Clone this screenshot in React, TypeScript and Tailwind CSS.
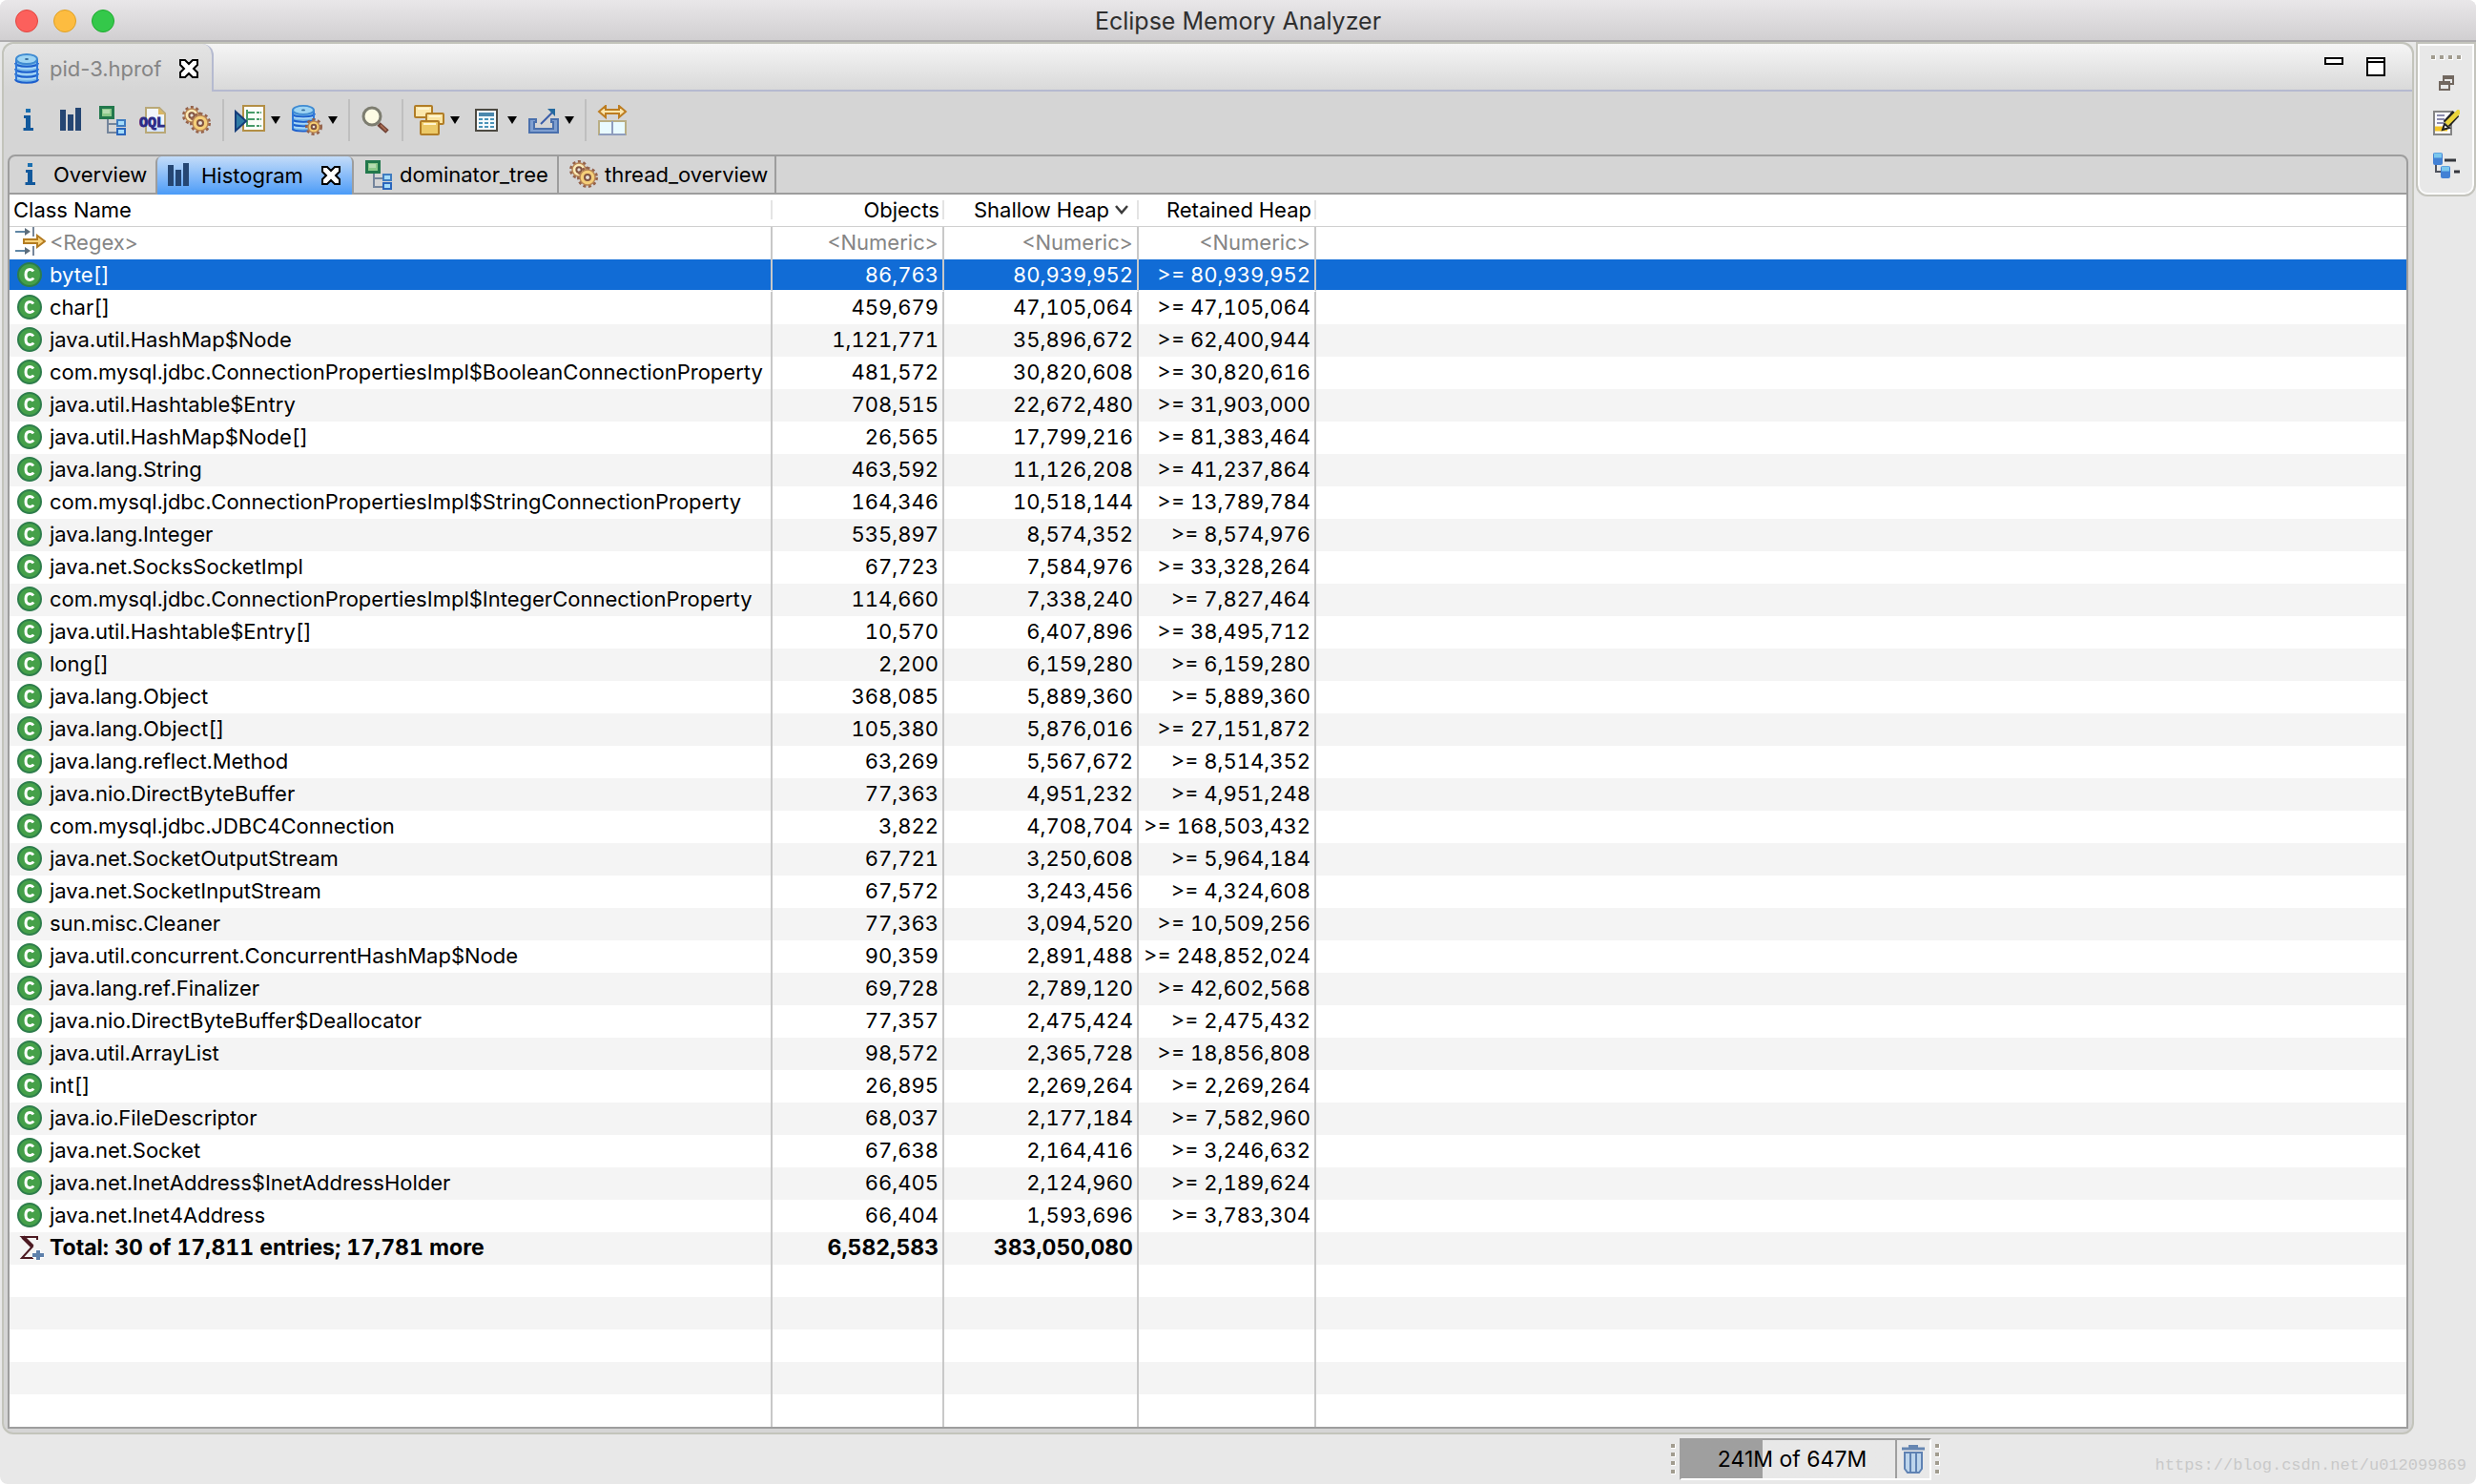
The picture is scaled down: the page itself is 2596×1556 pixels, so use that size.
import { clsx } from "clsx";
import { useState, type ReactNode } from "react";

type Row = [name: string, objects: string, shallow: string, retained: string];

const ROWS: Row[] = [
  ["byte[]", "86,763", "80,939,952", ">= 80,939,952"],
  ["char[]", "459,679", "47,105,064", ">= 47,105,064"],
  ["java.util.HashMap$Node", "1,121,771", "35,896,672", ">= 62,400,944"],
  ["com.mysql.jdbc.ConnectionPropertiesImpl$BooleanConnectionProperty", "481,572", "30,820,608", ">= 30,820,616"],
  ["java.util.Hashtable$Entry", "708,515", "22,672,480", ">= 31,903,000"],
  ["java.util.HashMap$Node[]", "26,565", "17,799,216", ">= 81,383,464"],
  ["java.lang.String", "463,592", "11,126,208", ">= 41,237,864"],
  ["com.mysql.jdbc.ConnectionPropertiesImpl$StringConnectionProperty", "164,346", "10,518,144", ">= 13,789,784"],
  ["java.lang.Integer", "535,897", "8,574,352", ">= 8,574,976"],
  ["java.net.SocksSocketImpl", "67,723", "7,584,976", ">= 33,328,264"],
  ["com.mysql.jdbc.ConnectionPropertiesImpl$IntegerConnectionProperty", "114,660", "7,338,240", ">= 7,827,464"],
  ["java.util.Hashtable$Entry[]", "10,570", "6,407,896", ">= 38,495,712"],
  ["long[]", "2,200", "6,159,280", ">= 6,159,280"],
  ["java.lang.Object", "368,085", "5,889,360", ">= 5,889,360"],
  ["java.lang.Object[]", "105,380", "5,876,016", ">= 27,151,872"],
  ["java.lang.reflect.Method", "63,269", "5,567,672", ">= 8,514,352"],
  ["java.nio.DirectByteBuffer", "77,363", "4,951,232", ">= 4,951,248"],
  ["com.mysql.jdbc.JDBC4Connection", "3,822", "4,708,704", ">= 168,503,432"],
  ["java.net.SocketOutputStream", "67,721", "3,250,608", ">= 5,964,184"],
  ["java.net.SocketInputStream", "67,572", "3,243,456", ">= 4,324,608"],
  ["sun.misc.Cleaner", "77,363", "3,094,520", ">= 10,509,256"],
  ["java.util.concurrent.ConcurrentHashMap$Node", "90,359", "2,891,488", ">= 248,852,024"],
  ["java.lang.ref.Finalizer", "69,728", "2,789,120", ">= 42,602,568"],
  ["java.nio.DirectByteBuffer$Deallocator", "77,357", "2,475,424", ">= 2,475,432"],
  ["java.util.ArrayList", "98,572", "2,365,728", ">= 18,856,808"],
  ["int[]", "26,895", "2,269,264", ">= 2,269,264"],
  ["java.io.FileDescriptor", "68,037", "2,177,184", ">= 7,582,960"],
  ["java.net.Socket", "67,638", "2,164,416", ">= 3,246,632"],
  ["java.net.InetAddress$InetAddressHolder", "66,405", "2,124,960", ">= 2,189,624"],
  ["java.net.Inet4Address", "66,404", "1,593,696", ">= 3,783,304"]
];

const BLANK_ROWS = [0, 1, 2, 3, 4];

function Icon({ children }: { children: ReactNode }) {
  return (
    <svg aria-hidden="true" className="size-8 shrink-0" viewBox="0 0 32 32">
      {children}
    </svg>
  );
}

function InfoIcon() {
  return (
    <Icon>
      <rect fill="#1a6fb0" height="4" width="5" x="13" y="4" />
      <path d="M11 11h7v13h3v3H10.500v-3H13V14h-2z" fill="#12599c" />
    </Icon>
  );
}

function BarsIcon() {
  return (
    <Icon>
      <path d="M5 5h6v22H5zM13 10h6v17h-6zM21 3h6v24h-6z" fill="#254673" />
    </Icon>
  );
}

function TreeIcon() {
  return (
    <Icon>
      <path d="M11 15v14h9M11 20h9" fill="none" stroke="#74859c" strokeWidth="2" />
      <rect fill="#8cc98a" height="11" stroke="#22784c" strokeWidth="3" width="13" x="3.500" y="2.500" />
      <rect fill="#b5dcb0" height="4" width="7" x="6" y="5" />
      <rect fill="#a5dcfa" height="6" stroke="#3f7cc0" strokeWidth="2" width="8" x="21" y="16" />
      <rect fill="#a5dcfa" height="6" stroke="#2a66bd" strokeWidth="2" width="8" x="21" y="25" />
    </Icon>
  );
}

function OqlIcon() {
  return (
    <Icon>
      <path d="M7 3h14l6 6v20H7z" fill="#f2f5fb" stroke="#b9a877" strokeWidth="2" />
      <path d="M20 3v7h7z" fill="#d9b765" />
      <path d="M8 21h18v7H8z" fill="#d7e6f8" />
      <text className="font-['Liberation_Mono',monospace] font-bold" fill="#2c2a86" fontSize="15" stroke="#2c2a86" strokeWidth="1" x="0" y="23">
        OQL
      </text>
    </Icon>
  );
}

function Gear({ cx, cy, r, fill }: { cx: number; cy: number; r: number; fill: string }) {
  return (
    <g>
      <circle cx={cx} cy={cy} fill="none" r={r} stroke="#94614a" strokeDasharray="2.800 2.400" strokeWidth="4" />
      <circle cx={cx} cy={cy} fill={fill} r={r - 1} stroke="#b98655" strokeWidth="1.500" />
      <circle cx={cx} cy={cy} fill="#e8e2da" r={r / 3} stroke="#80523f" strokeWidth="2" />
    </g>
  );
}

function GearsIcon() {
  return (
    <Icon>
      <Gear cx={11} cy={11} fill="#fbeab6" r={8} />
      <Gear cx={20} cy={19} fill="#f5cf79" r={9} />
    </Icon>
  );
}

function Cylinder() {
  return (
    <>
      <path d="M4 6v21c0 5 24 5 24 0V6z" fill="#76b6e8" />
      <path d="M4 12c0 5 24 5 24 0M4 18c0 5 24 5 24 0M4 23c0 5 24 5 24 0" fill="none" stroke="#a9d8f7" strokeWidth="2" />
      <path d="M4 10c0 5 24 5 24 0M4 16c0 5 24 5 24 0M4 21c0 5 24 5 24 0M4 27c0 5 24 5 24 0" fill="none" stroke="#1d5fcd" strokeWidth="2" />
      <path d="M5 6v22M27 6v22" stroke="#2f78d8" strokeWidth="2" />
      <ellipse cx="16" cy="6" fill="#9ed4f3" rx="11" ry="5" stroke="#3f8bd2" strokeWidth="2" />
      <ellipse cx="16" cy="6" fill="#35699a" rx="2" ry="1" />
    </>
  );
}

function DatabaseIcon() {
  return (
    <Icon>
      <Cylinder />
    </Icon>
  );
}

function DatabaseGearIcon() {
  return (
    <Icon>
      <g transform="translate(-4 0) scale(1 .9)">
        <Cylinder />
      </g>
      <Gear cx={23} cy={23} fill="#f6cf72" r={7} />
    </Icon>
  );
}

function ReportIcon() {
  return (
    <Icon>
      <rect fill="#fbfdf8" height="26" stroke="#b38f45" strokeWidth="2" width="22" x="9" y="1" />
      <path d="M13 5v18M13 8h8M13 15h8M13 22h8" fill="none" stroke="#479a69" strokeWidth="2" />
      <path d="M23 8h5M23 15h5M23 22h5" stroke="#479a69" strokeDasharray="3 1" strokeWidth="2" />
      <path d="M1 7l11 10L1 27z" fill="#2f7ba5" stroke="#153d7a" strokeWidth="2" />
    </Icon>
  );
}

function SearchIcon() {
  return (
    <Icon>
      <path d="M19 20l9 8" stroke="#6f4034" strokeWidth="5" />
      <path d="M21 21l6 6" stroke="#a86c52" strokeWidth="2" />
      <circle cx="12" cy="12" fill="#fdfbe4" r="9" stroke="#7d7d70" strokeWidth="3" />
    </Icon>
  );
}

function GroupIcon() {
  return (
    <Icon>
      <g stroke="#b17d26" strokeWidth="2">
        <rect fill="#fbe7ac" height="12" rx="1" width="18" x="1" y="1" />
        <rect fill="#fae3a0" height="11" rx="1" width="18" x="13" y="9" />
        <rect fill="#ecc967" height="14" rx="1" width="19" x="7" y="17" />
      </g>
      <path d="M4 4h12M16 12h12M10 20h13" stroke="#fff5d0" strokeWidth="2" />
    </Icon>
  );
}

function CalculatorIcon() {
  return (
    <Icon>
      <rect fill="#f4fafd" height="22" stroke="#4c4941" strokeWidth="2" width="22" x="5" y="5" />
      <path d="M8 10h16" stroke="#4a87ad" strokeWidth="4" />
      <path d="M8 15h16M8 19h16M8 23h16" stroke="#4a93b8" strokeDasharray="4 2" strokeWidth="2" />
    </Icon>
  );
}

function ExportIcon() {
  return (
    <Icon>
      <path d="M1 15h7v3H6v7h20v-7h-2v-3h7v14H1z" fill="#7f9fd0" stroke="#4a70ad" strokeWidth="2" />
      <path d="M13 20L25 8" fill="none" stroke="#3a5da8" strokeWidth="2" />
      <path d="M20 4h8v8z" fill="#24699f" />
    </Icon>
  );
}

function CompareIcon() {
  return (
    <Icon>
      <path d="M2 7l7-6v4h14V1l7 6-7 6V9H9v4z" fill="#fbe6ad" stroke="#bd7d21" strokeWidth="2" />
      <rect fill="#e9fbff" height="14" stroke="#b9ae84" strokeWidth="2" width="28" x="2" y="17" />
      <path d="M16 17v14M2 31h28" stroke="#8f9dbd" strokeWidth="2" />
    </Icon>
  );
}

function FilterIcon() {
  return (
    <Icon>
      <path d="M0 5h12M0 25h12" stroke="#5f86a5" strokeWidth="2" />
      <path d="M10 1l6 4-6 4zM10 21l6 4-6 4z" fill="#5c6d7c" />
      <path d="M19 0v10M19 20v10" stroke="#76869a" strokeWidth="2" />
      <path d="M9 13h14V9l8 6-8 6v-4H9z" fill="#f9d37d" stroke="#b47c22" strokeWidth="2" />
    </Icon>
  );
}

function ClassIcon() {
  return (
    <svg aria-hidden="true" className="size-[26px] shrink-0" viewBox="0 0 26 26">
      <circle cx="13" cy="13" fill="#45a049" r="12" stroke="#2d7d4b" strokeWidth="2" />
      <path d="M17 9.500c-1-1.500-2-2-3.500-2-3 0-4.500 2-4.500 5.500s1.500 5.500 4.500 5.500c1.500 0 2.700-.5 3.700-2" fill="none" stroke="#fff" strokeWidth="3" />
    </svg>
  );
}

function TotalIcon() {
  return (
    <svg aria-hidden="true" className="size-[26px] shrink-0" viewBox="0 0 26 26">
      <path d="M19 5V2H3l11 10L3 24h12" fill="none" stroke="#4c1a22" strokeWidth="2" />
      <path d="M4 2l10 10" stroke="#4c1a22" strokeWidth="4" />
      <path d="M20 15v11M14 21h12" stroke="#fff" strokeWidth="6" />
      <path d="M20 16v10M14 21h12" stroke="#5d80ab" strokeWidth="4" />
    </svg>
  );
}

function CloseIcon() {
  return (
    <svg aria-hidden="true" className="size-5" viewBox="0 0 20 20">
      <path
        d="M1 1h5l4 4 4-4h5v5l-4 4 4 4v5h-5l-4-4-4 4H1v-5l4-4-4-4z"
        fill="#fff"
        stroke="#000"
        strokeWidth="2"
      />
    </svg>
  );
}

function Grip({ vertical = false }: { vertical?: boolean }) {
  return (
    <div className={clsx("flex gap-1", vertical && "flex-col")}>
      {[0, 1, 2, 3].map((dot) => (
        <span className="size-[5px] border-r border-b border-white bg-[#a19c8f]" key={dot} />
      ))}
    </div>
  );
}

function ToolButton({ label, menu = false, children }: { label: string; menu?: boolean; children: ReactNode }) {
  return (
    <button aria-label={label} className="flex items-center gap-1.5" type="button">
      {children}
      {menu ? (
        <svg aria-hidden="true" className="h-2 w-2.5" viewBox="0 0 10 8">
          <path d="M0 0h10L5 8z" />
        </svg>
      ) : null}
    </button>
  );
}

function Separator() {
  return <span className="-mx-px h-11 w-0.5 bg-[#bfbfbf]" />;
}

function Toolbar() {
  return (
    <div className="flex h-[66px] shrink-0 items-center gap-3 pb-4 pl-2.5 pt-2.5">
      <ToolButton label="Overview"><InfoIcon /></ToolButton>
      <ToolButton label="Histogram"><BarsIcon /></ToolButton>
      <ToolButton label="Dominator tree"><TreeIcon /></ToolButton>
      <ToolButton label="Object query"><OqlIcon /></ToolButton>
      <ToolButton label="Thread overview"><GearsIcon /></ToolButton>
      <Separator />
      <ToolButton label="Run report" menu><ReportIcon /></ToolButton>
      <ToolButton label="Query browser" menu><DatabaseGearIcon /></ToolButton>
      <Separator />
      <ToolButton label="Find object"><SearchIcon /></ToolButton>
      <Separator />
      <ToolButton label="Group result" menu><GroupIcon /></ToolButton>
      <ToolButton label="Calculate retained size" menu><CalculatorIcon /></ToolButton>
      <ToolButton label="Export" menu><ExportIcon /></ToolButton>
      <Separator />
      <ToolButton label="Compare"><CompareIcon /></ToolButton>
    </div>
  );
}

function ViewTabs() {
  return (
    <div className="flex h-10 shrink-0 border-b-2 border-[#9d9d9d]" role="tablist">
      <button className="flex w-[153px] items-center gap-2 pl-1.5" role="tab" type="button">
        <InfoIcon />
        Overview
      </button>
      <div className="-mb-0.5 flex w-[208px] items-center justify-between rounded-t-md border-x-2 border-[#9d9d9d] bg-linear-to-b from-[#c3dcf8] to-[#4a9bf7] pl-1.5 pr-3">
        <button aria-selected="true" className="flex items-center gap-2" role="tab" type="button">
          <BarsIcon />
          Histogram
        </button>
        <button aria-label="Close Histogram" type="button"><CloseIcon /></button>
      </div>
      <button className="flex w-[215px] items-center gap-1.5 border-r-2 border-[#9d9d9d] pl-2.5" role="tab" type="button">
        <TreeIcon />
        dominator_tree
      </button>
      <button className="flex w-[228px] items-center gap-1.5 border-r-2 border-[#9d9d9d] pl-2.5" role="tab" type="button">
        <GearsIcon />
        thread_overview
      </button>
    </div>
  );
}

const CELL = "border-r-2 border-[#c8c8c8] pr-1 text-right";
const HEAD = "pb-[7px] pt-1.5 font-normal";
const HEAD_LABEL = "flex h-5 items-center justify-end border-r-2 border-[#e4e4e4] pr-[3px]";

function HistogramTable() {
  const [selected, setSelected] = useState(0);

  return (
    <table className="w-full table-fixed border-separate border-spacing-0 whitespace-nowrap tabular-nums">
      <colgroup>
        <col className="w-[800px]" />
        <col className="w-[180px]" />
        <col className="w-[204px]" />
        <col className="w-[186px]" />
        <col />
      </colgroup>
      <thead>
        <tr className="h-[34px] [&>th]:border-b [&>th]:border-[#d0d0d0]">
          <th className={HEAD} scope="col">
            <span className="flex h-5 items-center border-r-2 border-[#e4e4e4] pl-1">Class Name</span>
          </th>
          <th className={HEAD} scope="col"><span className={HEAD_LABEL}>Objects</span></th>
          <th aria-sort="descending" className={HEAD} scope="col">
            <span className={clsx(HEAD_LABEL, "gap-1.5")}>
              Shallow Heap
              <svg aria-hidden="true" className="mr-1.5 h-2.5 w-3.5" viewBox="0 0 14 10">
                <path d="M1 1l6 7 6-7" fill="none" stroke="#3c3c3c" strokeWidth="2.500" />
              </svg>
            </span>
          </th>
          <th className={HEAD} scope="col"><span className={HEAD_LABEL}>Retained Heap</span></th>
          <th className={HEAD} />
        </tr>
      </thead>
      <tbody>
        <tr className="h-[34px] [&>td]:pb-0.5">
          <td className="border-r-2 border-[#c8c8c8] pl-1.5">
            <span className="flex items-center gap-1">
              <FilterIcon />
              <input aria-label="Class name filter" className="h-7 w-full placeholder:text-[#858585] placeholder:opacity-100" placeholder="<Regex>" />
            </span>
          </td>
          {["Objects", "Shallow heap", "Retained heap"].map((name) => (
            <td className={CELL} key={name}>
              <input
                aria-label={`${name} filter`}
                className="block h-7 w-full text-right placeholder:text-[#858585] placeholder:opacity-100"
                placeholder="<Numeric>"
              />
            </td>
          ))}
          <td />
        </tr>
        {ROWS.map(([name, objects, shallow, retained], index) => (
          <tr
            aria-selected={index === selected}
            className={clsx(
              "h-[34px]",
              index === selected
                ? "bg-[#116cd6] text-white [&>td]:border-b-2 [&>td]:border-b-white"
                : "bg-white even:bg-[#f4f4f4] [&>td]:pb-0.5"
            )}
            key={name}
            onClick={() => setSelected(index)}
          >
            <td className="border-r-2 border-[#c8c8c8] pl-2">
              <span className="flex items-center gap-2">
                <ClassIcon />
                {name}
              </span>
            </td>
            <td className={CELL}>{objects}</td>
            <td className={CELL}>{shallow}</td>
            <td className={CELL}>{retained}</td>
            <td />
          </tr>
        ))}
        <tr className="h-[34px] bg-[#f4f4f4] text-[23px] font-bold [&>td]:pb-0.5">
          <td className="border-r-2 border-[#c8c8c8] pl-2.5">
            <span className="flex items-center gap-1.5">
              <TotalIcon />
              Total: 30 of 17,811 entries; 17,781 more
            </span>
          </td>
          <td className={CELL}>6,582,583</td>
          <td className={CELL}>383,050,080</td>
          <td className={CELL} />
          <td />
        </tr>
        {BLANK_ROWS.map((row) => (
          <tr className="h-[34px] bg-white even:bg-[#f4f4f4]" key={row}>
            <td className={CELL} />
            <td className={CELL} />
            <td className={CELL} />
            <td className={CELL} />
            <td />
          </tr>
        ))}
      </tbody>
    </table>
  );
}

function SideBar() {
  return (
    <aside className="flex h-[162px] w-[63px] shrink-0 flex-col items-center rounded-b-xl border-2 border-[#c4c4bd] bg-[#e8e8e8] pt-3 shadow-[inset_0_0_0_2px_#fbfbfb]">
      <Grip />
      <button aria-label="Restore" className="mt-4" type="button">
        <svg aria-hidden="true" className="size-4" viewBox="0 0 16 16">
          <path d="M5 7V1h10v8h-5M5 3h10" fill="none" stroke="#71675f" strokeWidth="2" />
          <path d="M1 7h10v8H1zM1 9h10" fill="none" stroke="#71675f" strokeWidth="2" />
        </svg>
      </button>
      <button aria-label="Notes" className="mt-5" type="button">
        <svg aria-hidden="true" className="size-7" viewBox="0 0 28 28">
          <rect fill="#fafaff" height="24" stroke="#858585" strokeWidth="2" width="18" x="1" y="2" />
          <path d="M4 6h8M4 10h8M4 14h7" stroke="#8b8bad" strokeWidth="2" />
          <path d="M2 20h13" stroke="#f3c526" strokeWidth="5" />
          <path d="M14 15L24 4" stroke="#222" strokeWidth="9" />
          <path d="M14 15L28 1" stroke="#ecd53b" strokeWidth="5" />
          <path d="M12 15l5 4-7 2z" fill="#fff" stroke="#222" strokeWidth="2" />
        </svg>
      </button>
      <button aria-label="Navigation history" className="mt-4" type="button">
        <svg aria-hidden="true" className="size-7" viewBox="0 0 28 28">
          <path d="M3 13v8h6" fill="none" stroke="#50545e" strokeWidth="2" />
          <rect fill="#4381d4" height="13" rx="2" width="10" x="0" y="1" />
          <rect fill="#4381d4" height="13" rx="2" width="10" x="8" y="15" />
          <path d="M1 4h8M9 18h8" stroke="#7bc7ed" strokeWidth="5" />
          <path d="M12 9h12M22 21h6" stroke="#34363d" strokeWidth="3" />
        </svg>
      </button>
    </aside>
  );
}

function StatusBar() {
  return (
    <footer className="flex h-[52px] shrink-0 items-center pr-2.5">
      <div className="flex flex-1 items-center justify-end gap-1">
        <Grip vertical />
        <div className="flex h-11 w-[264px] border-2 border-b-white border-l-[#9f9f9f] border-r-white border-t-[#9f9f9f]">
          <span className="flex flex-1 items-center justify-center bg-linear-to-r from-[#9f9f9f] from-38% to-[#e8e8e8] to-38% pl-2 text-[23px]">
            241M of 647M
          </span>
          <button aria-label="Run garbage collector" className="flex w-9 items-center justify-center border-l-2 border-[#9f9f9f]" type="button">
            <svg aria-hidden="true" className="h-[30px] w-6" viewBox="0 0 24 30">
              <path d="M0 4h24M7 1h10" stroke="#6686b2" strokeWidth="3" />
              <path d="M3 8h18v17l-3 4H6l-3-4z" fill="#bdd5ec" stroke="#5f82b3" strokeWidth="2" />
              <path d="M9 8v20M15 8v20" stroke="#5f82b3" strokeWidth="2" />
            </svg>
          </button>
        </div>
        <Grip vertical />
      </div>
      <p className="w-[552px] pt-3 text-right font-['Liberation_Mono',monospace] text-[17px] text-[#c9c9c9]">
        https://blog.csdn.net/u012099869
      </p>
    </footer>
  );
}

export default function App() {
  return (
    <div className="flex h-screen flex-col overflow-hidden rounded-lg bg-[#e8e8e8] font-[Inter,'Liberation_Sans',sans-serif] text-[22px] leading-none text-black">
      <header className="flex h-11 shrink-0 items-center border-b-2 border-[#aeacae] bg-linear-to-b from-[#e9e7e9] to-[#d1cfd1] px-4 pt-0.5">
        <div className="flex flex-1 gap-4">
          <button aria-label="Close" className="size-6 rounded-full border border-[#e2463f] bg-[#fc605c]" type="button" />
          <button aria-label="Minimize" className="size-6 rounded-full border border-[#dfa023] bg-[#fdbc40]" type="button" />
          <button aria-label="Zoom" className="size-6 rounded-full border border-[#1eab2e] bg-[#34c84a]" type="button" />
        </div>
        <h1 className="text-[25px] leading-none text-[#2f2f2f]">Eclipse Memory Analyzer</h1>
        <div className="flex-1" />
      </header>

      <div className="flex min-h-0 flex-1 gap-0.5 pl-0.5">
        <main className="flex min-w-0 flex-1 flex-col rounded-xl border-2 border-[#c3c4bb] bg-[#d5d5d5]">
          <div className="flex h-[50px] shrink-0 rounded-t-xl bg-linear-to-b from-[#f5f5f5] to-[#d8d8d8]">
            <div className="flex w-[220px] items-center justify-between rounded-t-xl border-r-2 border-[#b5bad0] bg-linear-to-b from-[#e4e4e4] to-[#d5d5d5] pl-2 pr-3.5 pt-0.5">
              <span className="flex items-center gap-2 text-[#858585]">
                <DatabaseIcon />
                pid-3.hprof
              </span>
              <button aria-label="Close pid-3.hprof" type="button"><CloseIcon /></button>
            </div>
            <div className="flex flex-1 items-start justify-end gap-6 border-b-2 border-[#b5bad0] pr-7 pt-3.5">
              <button aria-label="Minimize view" className="h-2 w-5 border-2 border-black bg-white" type="button" />
              <button aria-label="Maximize view" className="flex size-5 border-2 border-black bg-white pt-0.5" type="button">
                <span className="h-0.5 w-full bg-black" />
              </button>
            </div>
          </div>
          <Toolbar />
          <section className="mx-1 mb-1 flex min-h-0 flex-1 flex-col overflow-hidden rounded-t-lg border-2 border-[#9d9d9d]">
            <ViewTabs />
            <div className="min-h-0 flex-1 overflow-hidden bg-white">
              <HistogramTable />
            </div>
          </section>
        </main>
        <SideBar />
      </div>

      <StatusBar />
    </div>
  );
}
